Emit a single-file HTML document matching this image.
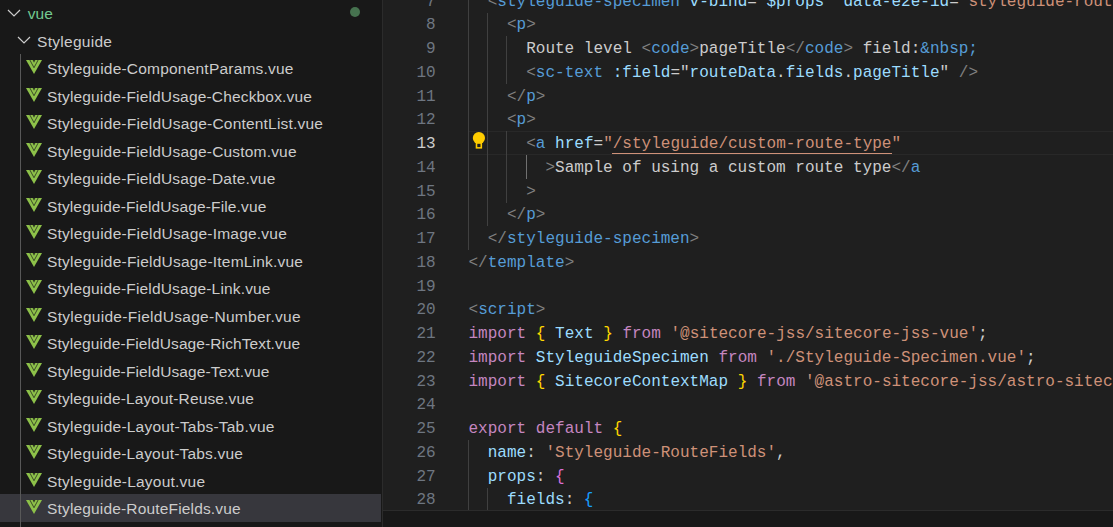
<!DOCTYPE html>
<html><head><meta charset="utf-8">
<style>
*{margin:0;padding:0;box-sizing:border-box}
html,body{width:1113px;height:527px;overflow:hidden;background:#1f1f1f}
#side{position:absolute;left:0;top:0;width:382px;height:527px;background:#181818}
#sb{position:absolute;left:382px;top:0;width:1px;height:527px;background:#2b2b2b}
.row{position:absolute;left:0;width:381px;height:27.5px;line-height:27.5px;font-family:"Liberation Sans",sans-serif;font-size:15.5px;color:#cccccc;white-space:nowrap}
.row.sel{background:#37373d}
.row .lbl{position:absolute;top:0.7px}
.vi{position:absolute;left:26.4px;top:5.9px;width:16px;height:14px}
.chev{position:absolute;width:14px;height:8px}
#tg{position:absolute;z-index:2;left:20px;top:54px;width:1px;height:473px;background:#585858}
#dot{position:absolute;left:349.9px;top:8.2px;width:10.2px;height:10.2px;border-radius:50%;background:#46724f}
#ed{position:absolute;left:383px;top:0;width:730px;height:510px;background:#1f1f1f;overflow:hidden}
#panel{position:absolute;left:383px;top:510px;width:730px;height:17px;background:#181818;border-top:1px solid #2b2b2b}
.ln{position:absolute;left:0;width:52.7px;text-align:right;font-family:"Liberation Mono",monospace;font-size:16.03px;line-height:23.75px;height:23.75px;color:#6e7681}
.ln.act{color:#cccccc}
.cl{position:absolute;left:85.5px;font-family:"Liberation Mono",monospace;font-size:16.03px;line-height:23.75px;height:23.75px;white-space:pre;color:#cccccc}
.g{position:absolute;width:1px;background:#404040}
.p{color:#808080}.t{color:#569cd6}.a{color:#9cdcfe}.s{color:#ce9178}.x{color:#cccccc}.k{color:#c586c0}
.b1{color:#ffd700}.b2{color:#da70d6}.b3{color:#179fff}.w{color:#cccccc}
</style></head><body>
<div id="side">
  <div id="tg"></div>
<div class="row" style="top:-1.0px"><svg class="chev" style="left:7px;top:9.7px" viewBox="0 0 14 8"><path d="M1 1L7 7L13 1" fill="none" stroke="#cccccc" stroke-width="1.2"/></svg><span class="lbl" style="left:27.8px;color:#73c991">vue</span><div id="dot"></div></div>
<div class="row" style="top:27.0px"><svg class="chev" style="left:17px;top:9.0px" viewBox="0 0 14 8"><path d="M1 1L7 7L13 1" fill="none" stroke="#cccccc" stroke-width="1.2"/></svg><span class="lbl" style="left:37px;letter-spacing:0.289px">Styleguide</span></div>
<div class="row" style="top:54.0px"><svg class="vi" viewBox="0 0 16 14"><path d="M0 0H16L8 14Z" fill="#8dc149"/><path d="M3.6 -0.5L8 7.7L12.4 -0.5" fill="none" stroke="#1c1c1c" stroke-width="0.85" stroke-opacity="0.85"/><path d="M6.6 0H9.4L8 2.7Z" fill="#1c1c1c" fill-opacity="0.8"/></svg><span class="lbl" style="left:47px;letter-spacing:0.21px">Styleguide-ComponentParams.vue</span></div>
<div class="row" style="top:82.0px"><svg class="vi" viewBox="0 0 16 14"><path d="M0 0H16L8 14Z" fill="#8dc149"/><path d="M3.6 -0.5L8 7.7L12.4 -0.5" fill="none" stroke="#1c1c1c" stroke-width="0.85" stroke-opacity="0.85"/><path d="M6.6 0H9.4L8 2.7Z" fill="#1c1c1c" fill-opacity="0.8"/></svg><span class="lbl" style="left:47px;letter-spacing:0.167px">Styleguide-FieldUsage-Checkbox.vue</span></div>
<div class="row" style="top:109.0px"><svg class="vi" viewBox="0 0 16 14"><path d="M0 0H16L8 14Z" fill="#8dc149"/><path d="M3.6 -0.5L8 7.7L12.4 -0.5" fill="none" stroke="#1c1c1c" stroke-width="0.85" stroke-opacity="0.85"/><path d="M6.6 0H9.4L8 2.7Z" fill="#1c1c1c" fill-opacity="0.8"/></svg><span class="lbl" style="left:47px;letter-spacing:0.197px">Styleguide-FieldUsage-ContentList.vue</span></div>
<div class="row" style="top:137.0px"><svg class="vi" viewBox="0 0 16 14"><path d="M0 0H16L8 14Z" fill="#8dc149"/><path d="M3.6 -0.5L8 7.7L12.4 -0.5" fill="none" stroke="#1c1c1c" stroke-width="0.85" stroke-opacity="0.85"/><path d="M6.6 0H9.4L8 2.7Z" fill="#1c1c1c" fill-opacity="0.8"/></svg><span class="lbl" style="left:47px;letter-spacing:0.184px">Styleguide-FieldUsage-Custom.vue</span></div>
<div class="row" style="top:164.0px"><svg class="vi" viewBox="0 0 16 14"><path d="M0 0H16L8 14Z" fill="#8dc149"/><path d="M3.6 -0.5L8 7.7L12.4 -0.5" fill="none" stroke="#1c1c1c" stroke-width="0.85" stroke-opacity="0.85"/><path d="M6.6 0H9.4L8 2.7Z" fill="#1c1c1c" fill-opacity="0.8"/></svg><span class="lbl" style="left:47px;letter-spacing:0.176px">Styleguide-FieldUsage-Date.vue</span></div>
<div class="row" style="top:192.0px"><svg class="vi" viewBox="0 0 16 14"><path d="M0 0H16L8 14Z" fill="#8dc149"/><path d="M3.6 -0.5L8 7.7L12.4 -0.5" fill="none" stroke="#1c1c1c" stroke-width="0.85" stroke-opacity="0.85"/><path d="M6.6 0H9.4L8 2.7Z" fill="#1c1c1c" fill-opacity="0.8"/></svg><span class="lbl" style="left:47px;letter-spacing:0.134px">Styleguide-FieldUsage-File.vue</span></div>
<div class="row" style="top:219.0px"><svg class="vi" viewBox="0 0 16 14"><path d="M0 0H16L8 14Z" fill="#8dc149"/><path d="M3.6 -0.5L8 7.7L12.4 -0.5" fill="none" stroke="#1c1c1c" stroke-width="0.85" stroke-opacity="0.85"/><path d="M6.6 0H9.4L8 2.7Z" fill="#1c1c1c" fill-opacity="0.8"/></svg><span class="lbl" style="left:47px;letter-spacing:0.21px">Styleguide-FieldUsage-Image.vue</span></div>
<div class="row" style="top:247.0px"><svg class="vi" viewBox="0 0 16 14"><path d="M0 0H16L8 14Z" fill="#8dc149"/><path d="M3.6 -0.5L8 7.7L12.4 -0.5" fill="none" stroke="#1c1c1c" stroke-width="0.85" stroke-opacity="0.85"/><path d="M6.6 0H9.4L8 2.7Z" fill="#1c1c1c" fill-opacity="0.8"/></svg><span class="lbl" style="left:47px;letter-spacing:0.212px">Styleguide-FieldUsage-ItemLink.vue</span></div>
<div class="row" style="top:274.0px"><svg class="vi" viewBox="0 0 16 14"><path d="M0 0H16L8 14Z" fill="#8dc149"/><path d="M3.6 -0.5L8 7.7L12.4 -0.5" fill="none" stroke="#1c1c1c" stroke-width="0.85" stroke-opacity="0.85"/><path d="M6.6 0H9.4L8 2.7Z" fill="#1c1c1c" fill-opacity="0.8"/></svg><span class="lbl" style="left:47px;letter-spacing:0.159px">Styleguide-FieldUsage-Link.vue</span></div>
<div class="row" style="top:302.0px"><svg class="vi" viewBox="0 0 16 14"><path d="M0 0H16L8 14Z" fill="#8dc149"/><path d="M3.6 -0.5L8 7.7L12.4 -0.5" fill="none" stroke="#1c1c1c" stroke-width="0.85" stroke-opacity="0.85"/><path d="M6.6 0H9.4L8 2.7Z" fill="#1c1c1c" fill-opacity="0.8"/></svg><span class="lbl" style="left:47px;letter-spacing:0.287px">Styleguide-FieldUsage-Number.vue</span></div>
<div class="row" style="top:329.0px"><svg class="vi" viewBox="0 0 16 14"><path d="M0 0H16L8 14Z" fill="#8dc149"/><path d="M3.6 -0.5L8 7.7L12.4 -0.5" fill="none" stroke="#1c1c1c" stroke-width="0.85" stroke-opacity="0.85"/><path d="M6.6 0H9.4L8 2.7Z" fill="#1c1c1c" fill-opacity="0.8"/></svg><span class="lbl" style="left:47px;letter-spacing:0.1px">Styleguide-FieldUsage-RichText.vue</span></div>
<div class="row" style="top:357.0px"><svg class="vi" viewBox="0 0 16 14"><path d="M0 0H16L8 14Z" fill="#8dc149"/><path d="M3.6 -0.5L8 7.7L12.4 -0.5" fill="none" stroke="#1c1c1c" stroke-width="0.85" stroke-opacity="0.85"/><path d="M6.6 0H9.4L8 2.7Z" fill="#1c1c1c" fill-opacity="0.8"/></svg><span class="lbl" style="left:47px;letter-spacing:0.124px">Styleguide-FieldUsage-Text.vue</span></div>
<div class="row" style="top:384.0px"><svg class="vi" viewBox="0 0 16 14"><path d="M0 0H16L8 14Z" fill="#8dc149"/><path d="M3.6 -0.5L8 7.7L12.4 -0.5" fill="none" stroke="#1c1c1c" stroke-width="0.85" stroke-opacity="0.85"/><path d="M6.6 0H9.4L8 2.7Z" fill="#1c1c1c" fill-opacity="0.8"/></svg><span class="lbl" style="left:47px;letter-spacing:0.131px">Styleguide-Layout-Reuse.vue</span></div>
<div class="row" style="top:412.0px"><svg class="vi" viewBox="0 0 16 14"><path d="M0 0H16L8 14Z" fill="#8dc149"/><path d="M3.6 -0.5L8 7.7L12.4 -0.5" fill="none" stroke="#1c1c1c" stroke-width="0.85" stroke-opacity="0.85"/><path d="M6.6 0H9.4L8 2.7Z" fill="#1c1c1c" fill-opacity="0.8"/></svg><span class="lbl" style="left:47px;letter-spacing:0.203px">Styleguide-Layout-Tabs-Tab.vue</span></div>
<div class="row" style="top:439.0px"><svg class="vi" viewBox="0 0 16 14"><path d="M0 0H16L8 14Z" fill="#8dc149"/><path d="M3.6 -0.5L8 7.7L12.4 -0.5" fill="none" stroke="#1c1c1c" stroke-width="0.85" stroke-opacity="0.85"/><path d="M6.6 0H9.4L8 2.7Z" fill="#1c1c1c" fill-opacity="0.8"/></svg><span class="lbl" style="left:47px;letter-spacing:0.184px">Styleguide-Layout-Tabs.vue</span></div>
<div class="row" style="top:467.0px"><svg class="vi" viewBox="0 0 16 14"><path d="M0 0H16L8 14Z" fill="#8dc149"/><path d="M3.6 -0.5L8 7.7L12.4 -0.5" fill="none" stroke="#1c1c1c" stroke-width="0.85" stroke-opacity="0.85"/><path d="M6.6 0H9.4L8 2.7Z" fill="#1c1c1c" fill-opacity="0.8"/></svg><span class="lbl" style="left:47px;letter-spacing:0.235px">Styleguide-Layout.vue</span></div>
<div class="row sel" style="top:494.0px"><svg class="vi" viewBox="0 0 16 14"><path d="M0 0H16L8 14Z" fill="#8dc149"/><path d="M3.6 -0.5L8 7.7L12.4 -0.5" fill="none" stroke="#1c1c1c" stroke-width="0.85" stroke-opacity="0.85"/><path d="M6.6 0H9.4L8 2.7Z" fill="#1c1c1c" fill-opacity="0.8"/></svg><span class="lbl" style="left:47px;letter-spacing:0.164px">Styleguide-RouteFields.vue</span></div>
</div>
<div id="sb"></div>
<div id="ed">
<div id="hl" style="position:absolute;left:85.50px;top:131.40px;width:700px;height:23.4px;border-top:1.25px solid #282828;border-bottom:1.25px solid #282828"></div>
<div class="g" style="left:85.00px;top:0.00px;height:250.15px;background:#404040"></div>
<div class="g" style="left:85.00px;top:440.15px;height:69.85px;background:#404040"></div>
<div class="g" style="left:104.10px;top:12.65px;height:213.75px;background:#404040"></div>
<div class="g" style="left:104.10px;top:487.65px;height:22.35px;background:#404040"></div>
<div class="g" style="left:123.20px;top:36.40px;height:47.50px;background:#404040"></div>
<div class="g" style="left:123.20px;top:131.40px;height:71.25px;background:#404040"></div>
<div class="g" style="left:143.10px;top:155.15px;height:23.75px;background:#707070"></div>
<div style="position:absolute;left:229.10px;top:152.6px;width:279.70px;height:1.25px;background:#ce9178"></div>
<svg style="position:absolute;left:89px;top:131px" width="14" height="19" viewBox="0 0 14 19"><circle cx="6.9" cy="7" r="6.1" fill="#ffcc00"/><rect x="3.7" y="10" width="6.4" height="7.6" fill="#ffcc00"/><rect x="5.3" y="12.8" width="3.2" height="3.3" fill="#1f1f1f"/></svg>
<div class="ln" style="top:-9.50px">7</div>
<div class="cl" style="top:-9.50px"><span class="x">  </span><span class="p">&lt;</span><span class="t">styleguide-specimen</span><span class="x"> </span><span class="a">v-bind</span><span class="x">=&quot;</span><span class="a">$props</span><span class="x">&quot;</span><span class="x"> </span><span class="a">data-e2e-id</span><span class="x">=</span><span class="s">&quot;styleguide-route-fields&quot;</span><span class="p">&gt;</span></div>
<div class="ln" style="top:14.25px">8</div>
<div class="cl" style="top:14.25px"><span class="x">    </span><span class="p">&lt;</span><span class="t">p</span><span class="p">&gt;</span></div>
<div class="ln" style="top:38.00px">9</div>
<div class="cl" style="top:38.00px"><span class="x">      Route level </span><span class="p">&lt;</span><span class="t">code</span><span class="p">&gt;</span><span class="x">pageTitle</span><span class="p">&lt;/</span><span class="t">code</span><span class="p">&gt;</span><span class="x"> field:</span><span class="t">&amp;nbsp;</span></div>
<div class="ln" style="top:61.75px">10</div>
<div class="cl" style="top:61.75px"><span class="x">      </span><span class="p">&lt;</span><span class="t">sc-text</span><span class="x"> </span><span class="a">:field</span><span class="x">=&quot;</span><span class="a">routeData</span><span class="x">.</span><span class="a">fields</span><span class="x">.</span><span class="a">pageTitle</span><span class="x">&quot;</span><span class="x"> </span><span class="p">/&gt;</span></div>
<div class="ln" style="top:85.50px">11</div>
<div class="cl" style="top:85.50px"><span class="x">    </span><span class="p">&lt;/</span><span class="t">p</span><span class="p">&gt;</span></div>
<div class="ln" style="top:109.25px">12</div>
<div class="cl" style="top:109.25px"><span class="x">    </span><span class="p">&lt;</span><span class="t">p</span><span class="p">&gt;</span></div>
<div class="ln act" style="top:133.00px">13</div>
<div class="cl" style="top:133.00px"><span class="x">      </span><span class="p">&lt;</span><span class="t">a</span><span class="x"> </span><span class="a">href</span><span class="x">=</span><span class="s">&quot;</span><span class="s u">/styleguide/custom-route-type</span><span class="s">&quot;</span></div>
<div class="ln" style="top:156.75px">14</div>
<div class="cl" style="top:156.75px"><span class="x">        </span><span class="p">&gt;</span><span class="x">Sample of using a custom route type</span><span class="p">&lt;/</span><span class="t">a</span></div>
<div class="ln" style="top:180.50px">15</div>
<div class="cl" style="top:180.50px"><span class="x">      </span><span class="p">&gt;</span></div>
<div class="ln" style="top:204.25px">16</div>
<div class="cl" style="top:204.25px"><span class="x">    </span><span class="p">&lt;/</span><span class="t">p</span><span class="p">&gt;</span></div>
<div class="ln" style="top:228.00px">17</div>
<div class="cl" style="top:228.00px"><span class="x">  </span><span class="p">&lt;/</span><span class="t">styleguide-specimen</span><span class="p">&gt;</span></div>
<div class="ln" style="top:251.75px">18</div>
<div class="cl" style="top:251.75px"><span class="p">&lt;/</span><span class="t">template</span><span class="p">&gt;</span></div>
<div class="ln" style="top:275.50px">19</div>
<div class="cl" style="top:275.50px"></div>
<div class="ln" style="top:299.25px">20</div>
<div class="cl" style="top:299.25px"><span class="p">&lt;</span><span class="t">script</span><span class="p">&gt;</span></div>
<div class="ln" style="top:323.00px">21</div>
<div class="cl" style="top:323.00px"><span class="k">import</span><span class="x"> </span><span class="b1">{</span><span class="x"> </span><span class="a">Text</span><span class="x"> </span><span class="b1">}</span><span class="x"> </span><span class="k">from</span><span class="x"> </span><span class="s">&#x27;@sitecore-jss/sitecore-jss-vue&#x27;</span><span class="x">;</span></div>
<div class="ln" style="top:346.75px">22</div>
<div class="cl" style="top:346.75px"><span class="k">import</span><span class="x"> </span><span class="a">StyleguideSpecimen</span><span class="x"> </span><span class="k">from</span><span class="x"> </span><span class="s">&#x27;./Styleguide-Specimen.vue&#x27;</span><span class="x">;</span></div>
<div class="ln" style="top:370.50px">23</div>
<div class="cl" style="top:370.50px"><span class="k">import</span><span class="x"> </span><span class="b1">{</span><span class="x"> </span><span class="a">SitecoreContextMap</span><span class="x"> </span><span class="b1">}</span><span class="x"> </span><span class="k">from</span><span class="x"> </span><span class="s">&#x27;@astro-sitecore-jss/astro-sitecore-jss&#x27;</span><span class="x">;</span></div>
<div class="ln" style="top:394.25px">24</div>
<div class="cl" style="top:394.25px"></div>
<div class="ln" style="top:418.00px">25</div>
<div class="cl" style="top:418.00px"><span class="k">export</span><span class="x"> </span><span class="k">default</span><span class="x"> </span><span class="b1">{</span></div>
<div class="ln" style="top:441.75px">26</div>
<div class="cl" style="top:441.75px"><span class="x">  </span><span class="a">name</span><span class="x">: </span><span class="s">&#x27;Styleguide-RouteFields&#x27;</span><span class="x">,</span></div>
<div class="ln" style="top:465.50px">27</div>
<div class="cl" style="top:465.50px"><span class="x">  </span><span class="a">props</span><span class="x">: </span><span class="b2">{</span></div>
<div class="ln" style="top:489.25px">28</div>
<div class="cl" style="top:489.25px"><span class="x">    </span><span class="a">fields</span><span class="x">: </span><span class="b3">{</span></div>
</div>
<div id="panel"></div>
</body></html>
